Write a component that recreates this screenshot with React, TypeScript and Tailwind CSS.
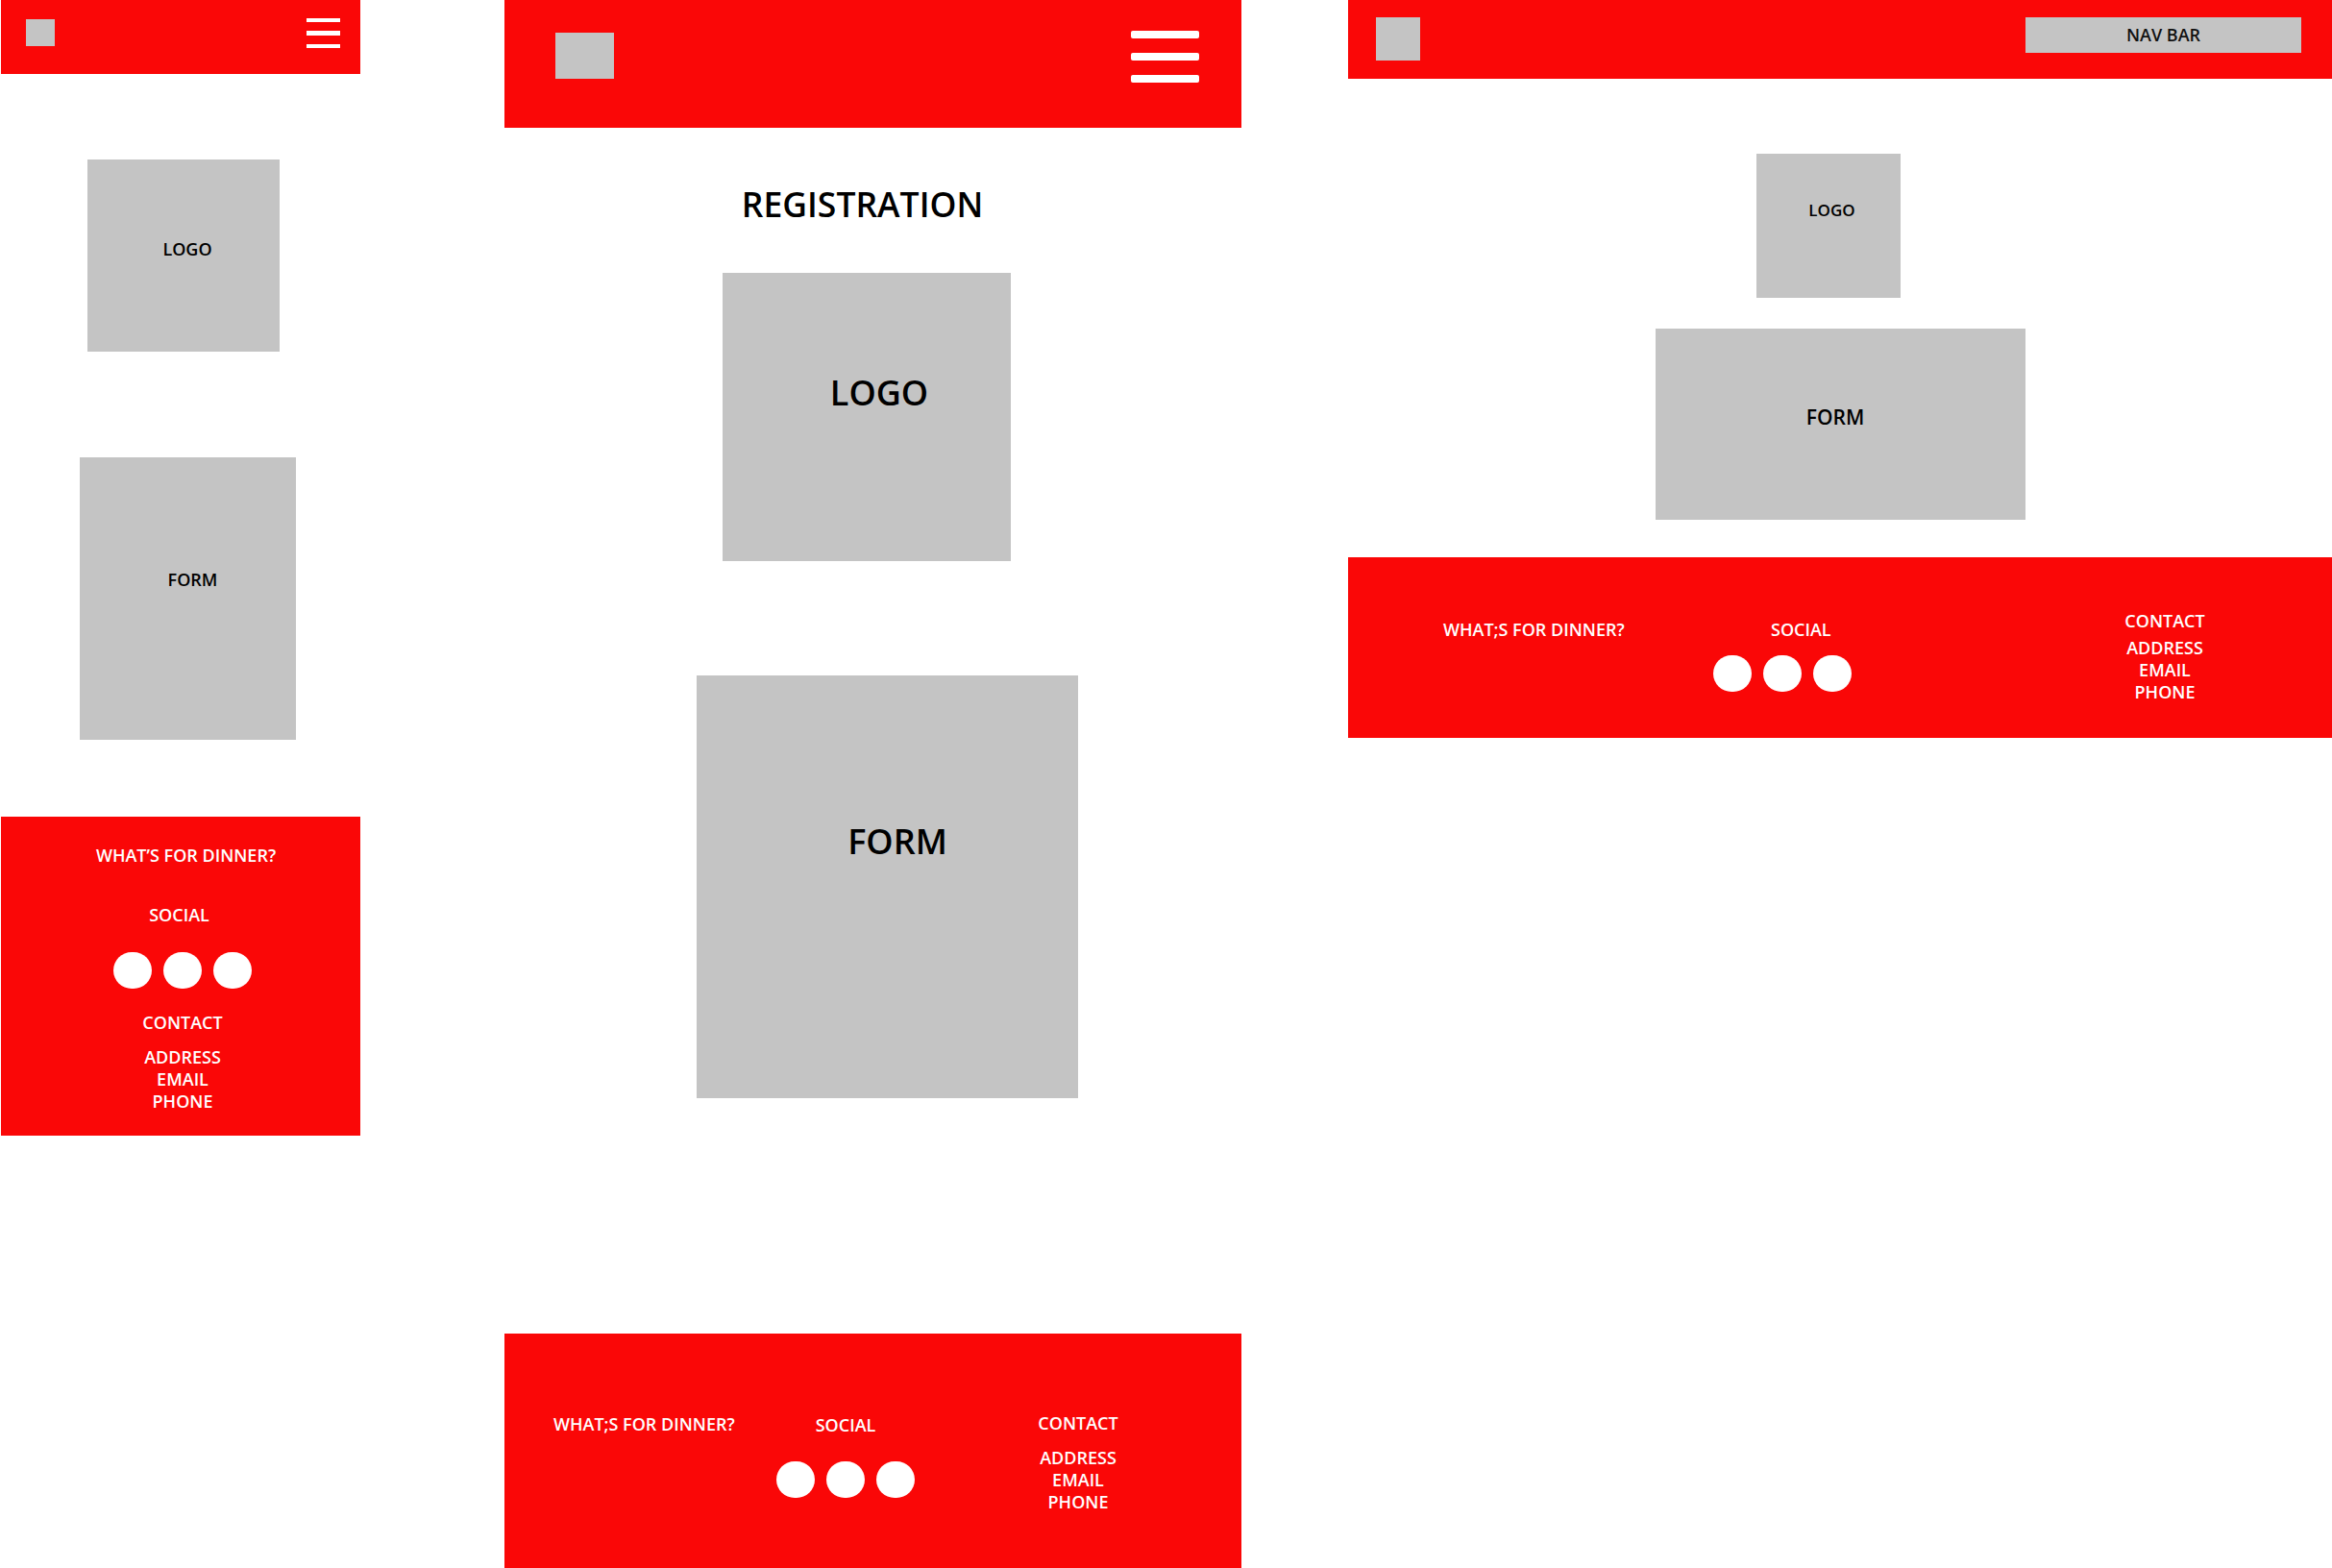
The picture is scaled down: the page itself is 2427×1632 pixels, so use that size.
import React from 'react';

// wireframe colours
const RED = 'bg-[#fa0707]';
const GRAY = 'bg-[#c4c4c4]';

function Dots({ gap }: { gap: string }) {
  return (
    <div className={`flex ${gap}`}>
      <div className="w-[40px] h-[38px] rounded-full bg-white" />
      <div className="w-[40px] h-[38px] rounded-full bg-white" />
      <div className="w-[40px] h-[38px] rounded-full bg-white" />
    </div>
  );
}

function MobileView() {
  return (
    <div className="ml-px w-[374px] shrink-0 flex flex-col">
      <div className={`${RED} h-[77px] flex items-start justify-between pl-[26px] pr-[21px] pt-[20px]`}>
        <div className={`${GRAY} w-[30px] h-[28px]`} />
        <div className="-mt-px flex flex-col gap-[8.9px] w-[35px]">
          <div className="h-[4.4px] bg-white" />
          <div className="h-[4.4px] bg-white" />
          <div className="h-[4.4px] bg-white" />
        </div>
      </div>

      <div className={`${GRAY} mt-[89px] ml-[90px] w-[200px] h-[200px] flex justify-center pl-[8px] pt-[81px]`}>
        <span className="text-[18px] leading-[24px] font-semibold text-black">LOGO</span>
      </div>

      <div className={`${GRAY} mt-[110px] ml-[82px] w-[225px] h-[294px] flex justify-center pl-[10px] pt-[115px]`}>
        <span className="text-[18px] leading-[24px] font-semibold text-black">FORM</span>
      </div>

      <div className={`${RED} mt-[80px] h-[332px] flex flex-col items-center pt-[29px] text-white text-[18px] leading-[23px] font-semibold`}>
        <div className="ml-[11px]">WHAT’S FOR DINNER?</div>
        <div className="mt-[39px] mr-[3px]">SOCIAL</div>
        <div className="mt-[27px] ml-[4px]">
          <Dots gap="gap-[12px]" />
        </div>
        <div className="mt-[24px] ml-[4px]">CONTACT</div>
        <div className="mt-[13px] ml-[4px] flex flex-col items-center">
          <span>ADDRESS</span>
          <span>EMAIL</span>
          <span>PHONE</span>
        </div>
      </div>
    </div>
  );
}

function TabletView() {
  return (
    <div className="ml-[150px] w-[767px] shrink-0 flex flex-col">
      <div className={`${RED} h-[133px] flex items-start justify-between pl-[53px] pr-[44px]`}>
        <div className={`${GRAY} mt-[34px] w-[61px] h-[48px]`} />
        <div className="mt-[32px] flex flex-col gap-[15px] w-[71px]">
          <div className="h-[8px] rounded-[2px] bg-white" />
          <div className="h-[8px] rounded-[2px] bg-white" />
          <div className="h-[8px] rounded-[2px] bg-white" />
        </div>
      </div>

      <h1 className="mt-[55px] pr-[22px] text-center text-[35.5px] leading-[48px] font-semibold text-black">REGISTRATION</h1>

      <div className={`${GRAY} mt-[48px] ml-[227px] w-[300px] h-[300px] flex justify-center pl-[26px] pt-[101px]`}>
        <span className="text-[36px] leading-[48px] font-semibold text-black">LOGO</span>
      </div>

      <div className={`${GRAY} mt-[119px] ml-[200px] w-[397px] h-[440px] flex justify-center pl-[21px] pt-[149px]`}>
        <span className="text-[36px] leading-[48px] font-semibold text-black">FORM</span>
      </div>

      <div className={`${RED} mt-[245px] h-[244px] flex items-start pt-[82px] text-white text-[18px] leading-[23px] font-semibold`}>
        <div className="ml-[51px] mt-px w-[200px] whitespace-nowrap">WHAT;S FOR DINNER?</div>
        <div className="ml-[24px] mt-[2px] w-[160px] flex flex-col items-center">
          <span>SOCIAL</span>
          <div className="mt-[26px]">
            <Dots gap="gap-[12px]" />
          </div>
        </div>
        <div className="ml-[82px] w-[160px] flex flex-col items-center">
          <span>CONTACT</span>
          <div className="mt-[13px] flex flex-col items-center">
            <span>ADDRESS</span>
            <span>EMAIL</span>
            <span>PHONE</span>
          </div>
        </div>
      </div>
    </div>
  );
}

function DesktopView() {
  return (
    <div className="ml-[111px] w-[1024px] shrink-0 flex flex-col">
      <div className={`${RED} h-[82px] flex items-start justify-between pl-[29px] pr-[32px] pt-[18px]`}>
        <div className={`${GRAY} w-[46px] h-[45px]`} />
        <div className={`${GRAY} w-[287px] h-[37px] flex items-center justify-center text-[18px] font-semibold text-[#111]`}>
          NAV BAR
        </div>
      </div>

      <div className={`${GRAY} mt-[78px] ml-[425px] w-[150px] h-[150px] flex justify-center pl-[7px] pt-[47px]`}>
        <span className="text-[17px] leading-[23px] font-semibold text-black">LOGO</span>
      </div>

      <div className={`${GRAY} mt-[32px] ml-[320px] w-[385px] h-[199px] flex justify-center pr-[11px] pt-[78px]`}>
        <span className="text-[21px] leading-[28px] font-semibold text-black">FORM</span>
      </div>

      <div className={`${RED} mt-[39px] h-[188px] flex items-start pt-[55px] text-white text-[18px] leading-[23px] font-semibold`}>
        <div className="ml-[99px] mt-[9px] w-[200px] whitespace-nowrap">WHAT;S FOR DINNER?</div>
        <div className="ml-[81px] mt-[9px] w-[144px] flex flex-col items-start">
          <span className="ml-[60px]">SOCIAL</span>
          <div className="mt-[15px]">
            <Dots gap="gap-[12px]" />
          </div>
        </div>
        <div className="ml-[246px] w-[160px] flex flex-col items-center">
          <span>CONTACT</span>
          <div className="mt-[5px] flex flex-col items-center">
            <span>ADDRESS</span>
            <span>EMAIL</span>
            <span>PHONE</span>
          </div>
        </div>
      </div>
    </div>
  );
}

export default function App() {
  return (
    <div className="w-[2427px] h-[1632px] overflow-hidden bg-white flex items-start font-['Open_Sans',sans-serif]">
      <MobileView />
      <TabletView />
      <DesktopView />
    </div>
  );
}
